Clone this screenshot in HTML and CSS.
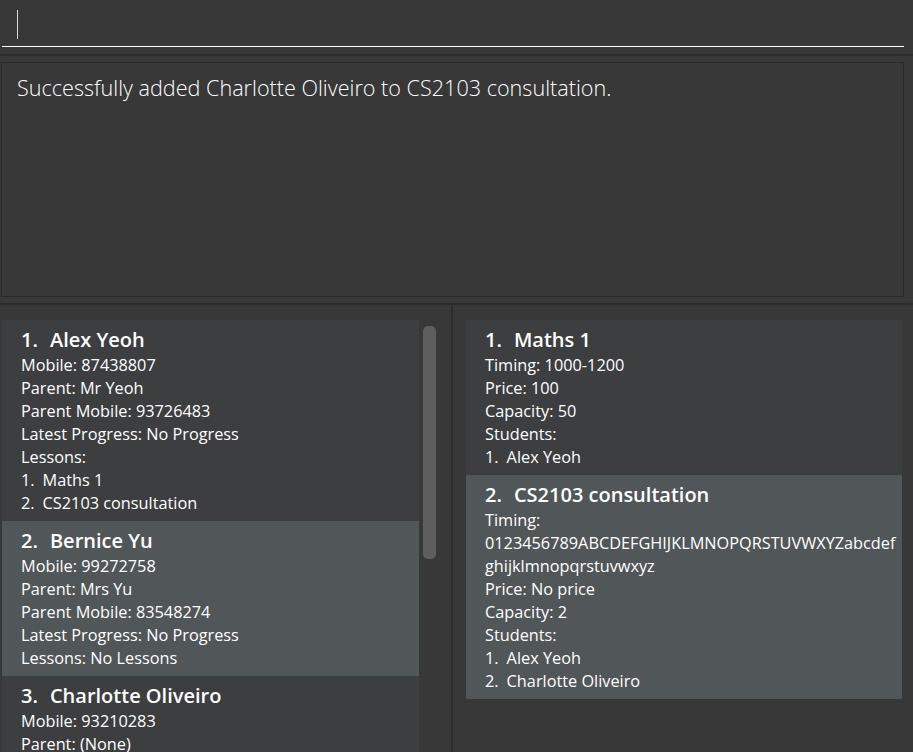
FILE: index.html
```html
<!DOCTYPE html>
<html>
<head>
<meta charset="utf-8">
<link rel="stylesheet" href="styles.css">
</head>
<body>
<div class="app">
  <div class="command-pane">
    <div class="command-box"><span class="caret"></span></div>
  </div>
  <div class="result-pane">
    <div class="result-box">Successfully added Charlotte Oliveiro to CS2103 consultation.</div>
  </div>
  <div class="lists">
    <div class="list-pane left">
      <div class="list">
        <div class="cell even">
          <div class="title"><span class="idx">1.</span>Alex Yeoh</div>
          <div class="line">Mobile: 87438807</div>
          <div class="line">Parent: Mr Yeoh</div>
          <div class="line">Parent Mobile: 93726483</div>
          <div class="line">Latest Progress: No Progress</div>
          <div class="line">Lessons:</div>
          <div class="line"><span class="num">1.</span>Maths 1</div>
          <div class="line"><span class="num">2.</span>CS2103 consultation</div>
        </div>
        <div class="cell odd">
          <div class="title"><span class="idx">2.</span>Bernice Yu</div>
          <div class="line">Mobile: 99272758</div>
          <div class="line">Parent: Mrs Yu</div>
          <div class="line">Parent Mobile: 83548274</div>
          <div class="line">Latest Progress: No Progress</div>
          <div class="line">Lessons: No Lessons</div>
        </div>
        <div class="cell even">
          <div class="title"><span class="idx">3.</span>Charlotte Oliveiro</div>
          <div class="line">Mobile: 93210283</div>
          <div class="line">Parent: (None)</div>
          <div class="line">Parent Mobile: (None)</div>
          <div class="line">Latest Progress: No Progress</div>
          <div class="line">Lessons:</div>
          <div class="line"><span class="num">1.</span>CS2103 consultation</div>
        </div>
      </div>
      <div class="scroll-track"><div class="thumb"></div></div>
    </div>
    <div class="divider"></div>
    <div class="list-pane right">
      <div class="list">
        <div class="cell even">
          <div class="title"><span class="idx">1.</span>Maths 1</div>
          <div class="line">Timing: 1000-1200</div>
          <div class="line">Price: 100</div>
          <div class="line">Capacity: 50</div>
          <div class="line">Students:</div>
          <div class="line"><span class="num">1.</span>Alex Yeoh</div>
        </div>
        <div class="cell odd">
          <div class="title"><span class="idx">2.</span>CS2103 consultation</div>
          <div class="line">Timing:</div>
          <div class="line">0123456789ABCDEFGHIJKLMNOPQRSTUVWXYZabcdef</div>
          <div class="line">ghijklmnopqrstuvwxyz</div>
          <div class="line">Price: No price</div>
          <div class="line">Capacity: 2</div>
          <div class="line">Students:</div>
          <div class="line"><span class="num">1.</span>Alex Yeoh</div>
          <div class="line"><span class="num">2.</span>Charlotte Oliveiro</div>
        </div>
      </div>
    </div>
  </div>
</div>
</body>
</html>
```
FILE: styles.css
```css
html, body {
  margin: 0;
  padding: 0;
  background: #383838;
}
.app {
  width: 913px;
  height: 752px;
  overflow: hidden;
  display: flex;
  flex-direction: column;
  font-family: "Open Sans", "Liberation Sans", sans-serif;
  color: #ffffff;
}
.command-pane {
  height: 54px;
  border-bottom: 2px solid #2c2c2c;
  flex: none;
}
.command-box {
  margin-left: 2px;
  width: 902px;
  height: 47px;
  box-sizing: border-box;
  border-bottom: 1px solid #ffffff;
  padding: 10px 0 0 15px;
}
.caret {
  display: block;
  width: 1px;
  height: 29px;
  background: #d8d8d8;
}
.result-pane {
  flex: none;
  padding: 6px 0 6px 1px;
  border-bottom: 2px solid #2c2c2c;
}
.result-box {
  box-sizing: border-box;
  width: 903px;
  height: 235px;
  border: 1px solid #2a2a2a;
  padding: 10px 0 0 15px;
  font-size: 21.6px;
  font-weight: 300;
  line-height: 30px;
  color: #ffffff;
}
.lists {
  flex: 1;
  display: flex;
  min-height: 0;
}
.list-pane {
  display: flex;
  min-height: 0;
  overflow: hidden;
}
.list-pane.left {
  width: 451px;
  padding: 15px 0 0 2px;
  box-sizing: border-box;
}
.list-pane.left .list {
  width: 417px;
}
.scroll-track {
  flex: 1;
}
.thumb {
  width: 13px;
  height: 233px;
  margin: 6px 0 0 4px;
  border-radius: 5px;
  background: #5e5e5e;
}
.divider {
  width: 2px;
  background: #2b2b2b;
  flex: none;
}
.list-pane.right {
  flex: 1;
  padding: 15px 11px 0 13px;
}
.list-pane.right .list {
  width: 436px;
}
.cell {
  padding: 6px 10px 6px 19px;
}
.cell.even {
  background: #3c3e3f;
}
.cell.odd {
  background: #515658;
}
.title {
  font-size: 20px;
  font-weight: 600;
  line-height: 28px;
  white-space: nowrap;
}
.idx {
  display: inline-block;
  margin-right: 12px;
}
.line {
  font-size: 16.3px;
  line-height: 23px;
  white-space: nowrap;
}
.num {
  display: inline-block;
  margin-right: 8px;
}
```
